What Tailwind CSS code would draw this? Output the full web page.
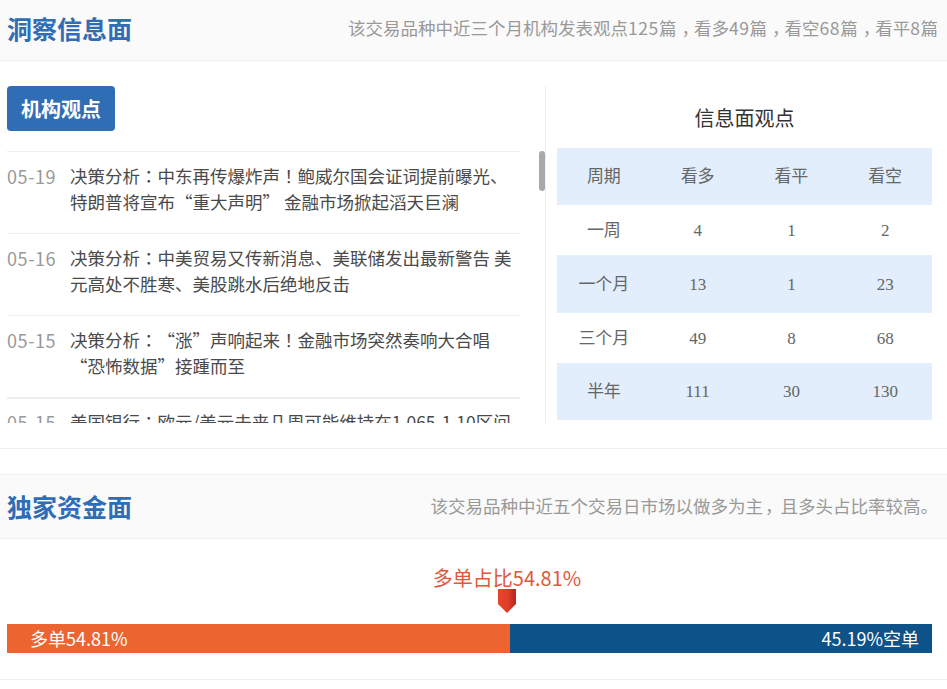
<!DOCTYPE html>
<html lang="zh-CN">
<head>
    <meta charset="UTF-8">
    <title>洞察信息面</title>
    <script src="https://cdn.jsdelivr.net/npm/@tailwindcss/browser@4"></script>
</head>
<body class="bg-white font-['Noto_Sans_CJK_SC',sans-serif] overflow-hidden [text-spacing-trim:space-all]">
    <!-- 洞察信息面 -->
    <div class="h-[61px] bg-[#fafafa] border-b border-[#f0f0f0] flex items-center justify-between pl-[7px] pr-[9px] pb-[4px]">
        <h2 class="text-[25px] font-bold text-[#2f6db5] leading-none">洞察信息面</h2>
        <p class="text-[17.5px] text-[#999] leading-none">该交易品种中近三个月机构发表观点<span class="tracking-[0.6px]">125</span>篇<span class="inline-block translate-x-[5px]">，</span>看多<span class="tracking-[0.6px]">49</span>篇<span class="inline-block translate-x-[5px]">，</span>看空<span class="tracking-[0.6px]">68</span>篇<span class="inline-block translate-x-[5px]">，</span>看平<span class="tracking-[0.6px]">8</span>篇</p>
    </div>

    <div class="flex h-[362px] pt-[25px]">
        <!-- 左侧观点列表 -->
        <div class="w-[546px] shrink-0 pl-[7px] border-r border-[#eee] relative">
            <div class="w-[108px] h-[45px] rounded bg-[#2f6db5] text-white text-[20px] font-bold flex items-center justify-center">机构观点</div>
            <div class="w-[513px] h-[272px] mt-[20px] overflow-hidden text-[17.5px] leading-[26px] text-[#4a4a4a]">
                <div class="flex border-t border-[#eee] pt-[11px] pb-[18px]">
                    <span class="w-[63px] shrink-0 text-[18px] tracking-[0.6px] text-[#999]">05-19</span>
                    <p>决策分析<span lang="zh-TW" class="font-['Noto_Sans_CJK_TC']">：</span>中东再传爆炸声<span lang="zh-TW" class="font-['Noto_Sans_CJK_TC']">！</span>鲍威尔国会证词提前曝光、特朗普将宣布“重大声明” 金融市场掀起滔天巨澜</p>
                </div>
                <div class="flex border-t border-[#eee] pt-[11px] pb-[18px]">
                    <span class="w-[63px] shrink-0 text-[18px] tracking-[0.6px] text-[#999]">05-16</span>
                    <p>决策分析<span lang="zh-TW" class="font-['Noto_Sans_CJK_TC']">：</span>中美贸易又传新消息、美联储发出最新警告 美元高处不胜寒、美股跳水后绝地反击</p>
                </div>
                <div class="flex border-t border-[#eee] pt-[11px] pb-[18px]">
                    <span class="w-[63px] shrink-0 text-[18px] tracking-[0.6px] text-[#999]">05-15</span>
                    <p>决策分析<span lang="zh-TW" class="font-['Noto_Sans_CJK_TC']">：</span>“涨”声响起来<span lang="zh-TW" class="font-['Noto_Sans_CJK_TC']">！</span>金融市场突然奏响大合唱“恐怖数据”接踵而至</p>
                </div>
                <div class="flex border-t-2 border-[#eee] pt-[10px] pb-[18px]">
                    <span class="w-[63px] shrink-0 text-[18px] tracking-[0.6px] text-[#999]">05-15</span>
                    <p>美国银行<span lang="zh-TW" class="font-['Noto_Sans_CJK_TC']">：</span>欧元/美元未来几周可能维持在1.065-1.10区间</p>
                </div>
            </div>
            <!-- 滚动条 -->
            <div class="absolute right-0 top-[65px] w-[6px] h-[40px] rounded-sm bg-[#a9a9a9]"></div>
        </div>

        <!-- 右侧信息面观点 -->
        <div class="w-[375px] ml-[11px]">
            <h3 class="h-[62px] text-[20px] text-[#333] text-center leading-[64px]">信息面观点</h3>
            <table class="w-full table-fixed text-[17px] text-[#666] text-center font-['Liberation_Serif','Noto_Sans_CJK_SC',serif] [&_td]:pt-[1px]">
                <tbody>
                    <tr class="h-[57px] bg-[#e2eefc]"><td>周期</td><td>看多</td><td>看平</td><td>看空</td></tr>
                    <tr class="h-[50px]"><td>一周</td><td>4</td><td>1</td><td>2</td></tr>
                    <tr class="h-[58px] bg-[#e2eefc]"><td>一个月</td><td>13</td><td>1</td><td>23</td></tr>
                    <tr class="h-[50px]"><td>三个月</td><td>49</td><td>8</td><td>68</td></tr>
                    <tr class="h-[57px] bg-[#e2eefc]"><td>半年</td><td>111</td><td>30</td><td>130</td></tr>
                </tbody>
            </table>
        </div>
    </div>

    <div class="h-[26px] mt-[25px] border-t border-[#eee]"></div>

    <!-- 独家资金面 -->
    <div class="h-[65px] bg-[#fafafa] border-y border-[#f0f0f0] flex items-center justify-between pl-[7px] pr-[9px] pb-[1px]">
        <h2 class="text-[25px] font-bold text-[#2f6db5] leading-none">独家资金面</h2>
        <p class="text-[17.5px] text-[#999] leading-none">该交易品种中近五个交易日市场以做多为主<span class="inline-block translate-x-[2px]">，</span>且多头占比率较高。</p>
    </div>

    <div class="px-[7px] pt-[24px]">
        <div class="w-[925px] relative h-[61px]">
            <p class="absolute left-[500px] -translate-x-1/2 top-0 text-[20px] leading-[30px] text-[#e0583a] whitespace-nowrap">多单占比54.81%</p>
            <svg class="absolute left-[491px] top-[26px]" width="18" height="24" viewBox="0 0 18 24">
                <defs>
                    <linearGradient id="pin" x1="0" x2="1" y1="0" y2="0">
                        <stop offset="0" stop-color="#e8452f"></stop>
                        <stop offset="0.55" stop-color="#e03c2a"></stop>
                        <stop offset="1" stop-color="#b3281c"></stop>
                    </linearGradient>
                </defs>
                <path d="M0 0H18V15L9 24L0 15Z" fill="url(#pin)"></path>
            </svg>
        </div>
        <div class="w-[925px] h-[29px] flex text-[18px] leading-[28px] text-white">
            <div class="w-[503px] bg-[#ec6530] pl-[23px]">多单54.81%</div>
            <div class="flex-1 bg-[#0d5288] pr-[13px] text-right">45.19%空单</div>
        </div>
    </div>

    <div class="mt-[26px] border-t border-[#eee]"></div>
</body>
</html>
